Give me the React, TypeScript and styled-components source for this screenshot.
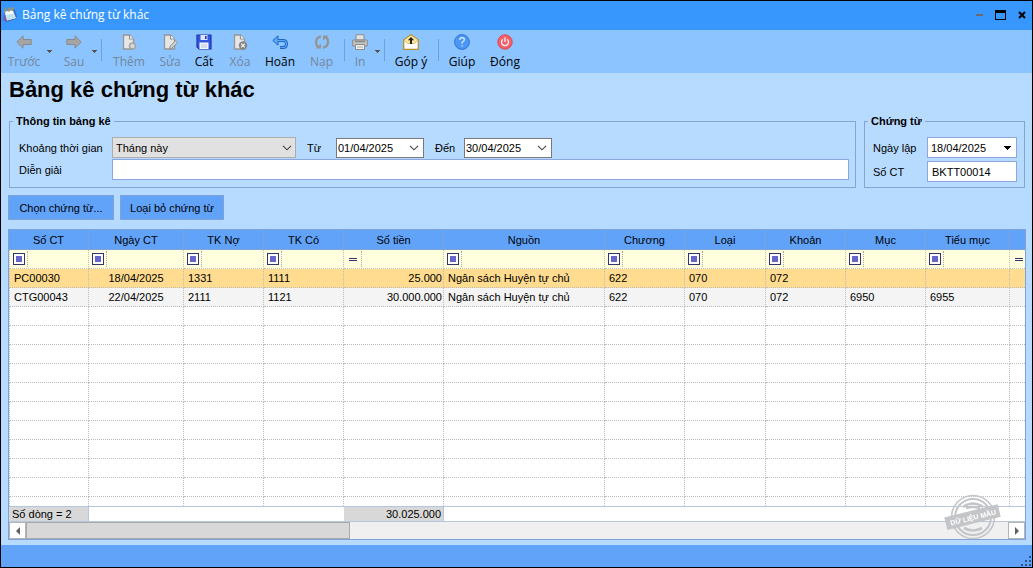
import React from "react";
import styled, { createGlobalStyle, css } from "styled-components";

const colors = {
  titleBar: "#3797fd",
  toolBar: "#8bc4ff",
  body: "#b7dbff",
  accent: "#62a3fa",
  accentLine: "#7fa3d6",
  groupLine: "#84a4d6",
  inputLine: "#8ea6e0",
  dots: "#bdbdbd",
  filterRow: "#ffffde",
  selectedRow: "#ffdc8f",
  alternateRow: "#f4f4f4",
};

const GlobalStyle = createGlobalStyle`
  *, *::before, *::after { box-sizing: border-box; }
  body {
    margin: 0;
    font-family: "Liberation Sans", Arial, sans-serif;
    font-size: 11px;
    line-height: 14px;
    color: #000;
  }
  button, input, select { font: inherit; color: inherit; }
  svg { display: block; flex: none; }
`;

const Window = styled.div`
  display: flex;
  flex-direction: column;
  height: 100vh;
  min-height: 440px;
  border: 1px solid #000;
  background: ${colors.body};
`;

/* ---------- title bar ---------- */

const TitleBar = styled.header`
  display: flex;
  align-items: center;
  gap: 4px;
  height: 29px;
  padding: 0 4px 2px 1px;
  background: ${colors.titleBar};
  color: #fff;
  font-family: "Open Sans", "Noto Sans", sans-serif;
`;

const WindowTitle = styled.span`
  flex: 1;
  font-size: 12px;
  line-height: 16px;
`;

const WindowButtons = styled.div`
  display: flex;
  gap: 8px;
`;

const WindowButton = styled.button`
  display: flex;
  align-items: center;
  justify-content: center;
  width: 13px;
  height: 14px;
  padding: 0;
  border: 0;
  background: none;
`;

/* ---------- tool bar ---------- */

const ToolBar = styled.nav`
  display: flex;
  align-items: flex-start;
  height: 43px;
  padding: 4px 5px 0;
  background: ${colors.toolBar};
  font-family: "Open Sans", "Noto Sans", sans-serif;
`;

const ToolButton = styled.button<{ $width: number }>`
  display: flex;
  flex: none;
  flex-direction: column;
  align-items: center;
  gap: 4px;
  width: ${(p) => p.$width}px;
  padding: 0;
  border: 0;
  background: none;
  font-size: 12px;
  line-height: 16px;
  white-space: nowrap;
  color: #000;
  &:disabled { color: #74869c; }
`;

const DropButton = styled.button<{ $width: number }>`
  display: flex;
  flex: none;
  align-items: center;
  justify-content: center;
  width: ${(p) => p.$width}px;
  height: 34px;
  padding: 0;
  border: 0;
  background: none;
`;

const ToolSeparator = styled.span`
  flex: none;
  width: 1px;
  height: 22px;
  margin: 5px 2px 0 3px;
  background: #6f9fdc;
`;

/* ---------- form ---------- */

const Content = styled.main`
  display: flex;
  flex: 1;
  flex-direction: column;
  min-height: 0;
  padding: 3px 6px 5px 7px;
`;

const PageTitle = styled.h1`
  margin: 0 0 10px 1px;
  font-size: 22px;
  line-height: 28px;
  font-weight: bold;
`;

const Groups = styled.div`
  display: flex;
  gap: 8px;
  padding: 0 1px;
`;

const Group = styled.fieldset<{ $width?: number }>`
  flex: ${(p) => (p.$width ? `0 0 ${p.$width}px` : "1")};
  min-width: 0;
  height: 74px;
  margin: 0;
  padding: 0 ${(p) => (p.$width ? 7 : 6)}px 0 8px;
  border: 1px solid ${colors.groupLine};
`;

const GroupTitle = styled.legend`
  margin-left: -5px;
  padding: 0 3px;
  font-weight: bold;
`;

const FieldRow = styled.div<{ $gap?: number }>`
  display: flex;
  align-items: center;
  margin-top: ${(p) => p.$gap ?? 1}px;
`;

const Label = styled.label<{ $width: number; $indent?: number }>`
  flex: none;
  width: ${(p) => p.$width}px;
  padding-left: ${(p) => p.$indent ?? 0}px;
  white-space: nowrap;
`;

const SelectBox = styled.div`
  display: grid;
  flex: none;
  align-items: center;
  width: 184px;
  height: 21px;
  > * { grid-area: 1 / 1; }
  > svg { justify-self: end; margin-right: 4px; pointer-events: none; }
`;

const Select = styled.select`
  appearance: none;
  width: 100%;
  height: 21px;
  padding: 0 20px 0 3px;
  border: 1px solid #adadad;
  border-radius: 0;
  background: #e1e1e1;
`;

const fieldBox = css`
  height: 21px;
  border: 1px solid ${colors.inputLine};
  border-radius: 0;
  background: #fff;
`;

const TextInput = styled.input`
  ${fieldBox}
  flex: 1;
  min-width: 0;
  padding: 0 4px;
`;

const DateBox = styled.div<{ $plain?: boolean }>`
  ${fieldBox}
  display: flex;
  flex: none;
  align-items: center;
  width: ${(p) => (p.$plain ? 90 : 88)}px;
  padding: 0 4px 0 ${(p) => (p.$plain ? 3 : 1)}px;
  ${(p) => !p.$plain && "border-color: #7a7a7a; height: 20px;"}
`;

const DateInput = styled.input`
  flex: 1;
  min-width: 0;
  padding: 0;
  border: 0;
  outline: 0;
  background: none;
`;

const IconButton = styled.button`
  display: flex;
  flex: none;
  padding: 0;
  border: 0;
  background: none;
`;

const Actions = styled.div`
  display: flex;
  gap: 6px;
  margin: 7px 0 9px;
`;

const ActionButton = styled.button<{ $width: number }>`
  width: ${(p) => p.$width}px;
  height: 25px;
  padding: 0;
  border: 1px solid ${colors.accentLine};
  background: ${colors.accent};
`;

/* ---------- grid ---------- */

const GridPanel = styled.section`
  position: relative;
  display: flex;
  flex: 1;
  flex-direction: column;
  min-height: 0;
  border: 1px solid ${colors.accentLine};
  background: #fff;
`;

const GridViewport = styled.div`
  flex: 1;
  min-height: 0;
  overflow: hidden;
`;

const Table = styled.table`
  width: 100%;
  table-layout: fixed;
  border-collapse: separate;
  border-spacing: 0;
`;

const HeadCell = styled.th`
  height: 20px;
  padding: 0;
  border-right: 1px solid ${colors.accentLine};
  border-bottom: 1px solid ${colors.accentLine};
  background: ${colors.accent};
  font-weight: normal;
  white-space: nowrap;
  &:last-child { border-right: 0; }
`;

const Cell = styled.td<{ $align?: string }>`
  height: 19px;
  padding: 0 1px 0 ${(p) => (p.$align ? 1 : 4)}px;
  border-right: 1px dotted ${colors.dots};
  border-bottom: 1px dotted ${colors.dots};
  text-align: ${(p) => p.$align ?? "left"};
  white-space: nowrap;
  overflow: hidden;
  &:first-child { border-left: 1px dotted ${colors.dots}; }
  &:last-child { border-right: 0; }
`;

const FilterCell = styled(Cell)`
  padding: 0;
`;

const Row = styled.tr<{ $tone?: string }>`
  background: ${(p) => p.$tone ?? "#fff"};
`;

const FilterButton = styled.button`
  display: flex;
  align-items: center;
  justify-content: center;
  width: 18px;
  height: 16px;
  padding: 0;
  border: 0;
  border-right: 1px dotted #a8a8a8;
  background: none;
`;

const SumCell = styled.td<{ $filled?: boolean; $align?: string }>`
  height: 16px;
  padding: 0 2px 0 3px;
  border-top: 1px solid #b4c6e0;
  border-bottom: 1px solid #b4c6e0;
  border-right: ${(p) => (p.$filled ? "1px solid #b4c6e0" : "0")};
  background: ${(p) => (p.$filled ? "#d8d8d8" : "#fff")};
  text-align: ${(p) => p.$align ?? "left"};
  white-space: nowrap;
`;

const ScrollBar = styled.div`
  display: flex;
  flex: none;
  height: 17px;
  background: #f0f0f0;
`;

const ScrollArrow = styled.button`
  display: flex;
  flex: none;
  align-items: center;
  justify-content: center;
  width: 17px;
  padding: 0;
  border: 1px solid #b4b4b4;
  background: #fff;
`;

const ScrollTrack = styled.div`
  flex: 1;
`;

const ScrollThumb = styled.div`
  width: 33%;
  height: 100%;
  border: 1px solid #a9a9a9;
  background: #d8d8d8;
`;

const Stamp = styled.div`
  position: absolute;
  right: 23px;
  bottom: -1px;
  pointer-events: none;
`;

const StatusBar = styled.footer`
  display: flex;
  flex: none;
  align-items: flex-end;
  justify-content: flex-end;
  height: 22px;
  background: ${colors.accent};
`;

/* ---------- drawings ---------- */

const Caret = ({ color = "#555" }: { color?: string }) => (
  <svg width="5" height="3" shapeRendering="crispEdges">
    <path d="M0 0h5v1H4v1H3v1H2V2H1V1H0z" fill={color} />
  </svg>
);

const Chevron = () => (
  <svg width="10" height="6" viewBox="0 0 10 6">
    <path d="M1 .8 5 4.8 9 .8" fill="none" stroke="#444" strokeWidth="1.1" />
  </svg>
);

const AppIcon = () => (
  <svg width="16" height="16" viewBox="0 0 16 16">
    <path d="M2 5.500 10.500 3l4 8.500-9.500 3.500z" fill="#4a5fa8" />
    <path d="M1.500 6.500V13l2.500 2 1-1z" fill="#7a5aa8" />
    <path d="M2.500 4.500 10.500 3l3.500 8-9 2.500z" fill="#fbfdff" />
    <path d="M4 8 11.500 6.500l2.300 4.600-8.500 2.400z" fill="#bfe3ee" />
    <path d="M3 5.500V2.500l1-1v3M7 5V1.500l1-.8v3M10 4V1.500l1-.8v3" fill="none" stroke="#a8925a" strokeWidth="1.100" />
    <path d="M12 2.500 14.500 10" stroke="#3f62b8" strokeWidth="1.200" />
  </svg>
);

const Page = () => (
  <>
    <path d="M2.500 1h6l4 4v10h-10z" fill="#e6e6e6" stroke="#969696" strokeWidth="1.300" />
    <path d="M8.500 1v4h4" fill="#f5f5f5" stroke="#969696" strokeWidth="1.200" />
  </>
);

const icons: Record<string, React.ReactNode> = {
  back: <path d="M.8 8 7 1.800V5.500h8.200v5H7v3.700z" fill="#a5a5a5" stroke="#8a8a8a" />,
  forward: <path d="M15.200 8 9 1.800V5.500H.8v5H9v3.700z" fill="#a5a5a5" stroke="#8a8a8a" />,
  add: (
    <>
      <Page />
      <circle cx="11.500" cy="12" r="3" fill="#d8d8d8" stroke="#a5a5a5" strokeWidth="1.600" />
    </>
  ),
  edit: (
    <>
      <Page />
      <path d="m7.500 15 .7-3L13.500 6.600 15.500 8.500l-5.300 5.500z" fill="#cfcfcf" stroke="#929292" />
    </>
  ),
  save: (
    <>
      <path d="M1 1h14v14H3l-2-2z" fill="#3457e0" stroke="#1c33b4" strokeWidth="1.200" />
      <path d="M4.500 1h7v5h-7z" fill="#dfe6ff" />
      <path d="M9 2h1.600v3H9z" fill="#2038b8" />
      <path d="M3.500 8.500h9V15h-9z" fill="#f4f6ff" />
      <path d="M5 11h6M5 13h6" stroke="#b4c0e8" />
    </>
  ),
  remove: (
    <>
      <Page />
      <circle cx="11" cy="11.500" r="4.200" fill="#868686" />
      <path d="m9.300 9.800 3.400 3.400m0-3.400-3.400 3.400" stroke="#eee" strokeWidth="1.300" />
    </>
  ),
  undo: (
    <>
      <path d="M4 6.500h7q3.500 0 3.500 3.500T11 13.500H8" fill="none" stroke="#1f66c8" strokeWidth="3" />
      <path d="M6 1.800v9.400L.8 6.500z" fill="#5aa7f4" stroke="#1f66c8" />
      <path d="M4 6.500h7q3.500 0 3.500 3.500T11 13.500H8.500" fill="none" stroke="#5aa7f4" strokeWidth="1.200" />
    </>
  ),
  reload: (
    <>
      <path d="M7 2.300Q2 3.500 2 8t3.500 5M9 13.700Q14 12.500 14 8t-3.500-5" fill="none" stroke="#959595" strokeWidth="2.400" />
      <path d="M1.500 14.500H7V9.500zM14.500 1.500H9v5z" fill="#959595" />
    </>
  ),
  print: (
    <>
      <path d="M4 .7h8V6H4z" fill="#e2e2e2" stroke="#8c8c8c" />
      <path d="M.7 6h14.600v6H.7z" fill="#c4c4c4" stroke="#8c8c8c" />
      <path d="M3 7.500h10" stroke="#888" strokeWidth="1.500" />
      <path d="M3.500 10.500h9v5h-9z" fill="#f0f0f0" stroke="#8c8c8c" />
      <path d="M5 13h6" stroke="#aaa" />
    </>
  ),
  mail: (
    <>
      <path d="M.7 6 8 .7 15.300 6v9.300H.7z" fill="#fff" stroke="#b8902c" strokeWidth="1.300" />
      <path d="M1.500 6 8 1.500 14.500 6 12 9H4z" fill="#ffe799" />
      <path d="m1 6 3.500 3.500h7L15 6" fill="none" stroke="#d6b765" />
      <path d="M8 3 4.800 6.300H7V10h2V6.300h2.200z" fill="#222" />
    </>
  ),
  help: (
    <>
      <circle cx="8" cy="8" r="7.400" fill="#4b97f8" stroke="#2f73d6" />
      <path d="M5.800 6q0-2.300 2.300-2.300t2.300 2.100Q10.400 7 8.100 8.300v1.500M8.100 11.200v1.400" fill="none" stroke="#e6f2ff" strokeWidth="1.200" />
    </>
  ),
  close: (
    <>
      <circle cx="8" cy="8" r="7.200" fill="#f4606a" stroke="#e0454f" />
      <path d="M5.800 5.400a3.500 3.500 0 1 0 4.400 0M8 3.500V8" fill="none" stroke="#fff" strokeWidth="1.200" />
    </>
  ),
};

const ToolIcon = ({ name }: { name: string }) => (
  <svg width="16" height="16" viewBox="0 0 16 16">
    {icons[name]}
  </svg>
);

const ContainsIcon = () => (
  <svg width="12" height="12" shapeRendering="crispEdges">
    <path d="M0 0h12v12H0z" fill="#33336e" />
    <path d="M1 1h10v10H1z" fill="#fff" />
    <path d="M3 3h6v6H3z" fill="#6666cc" />
  </svg>
);

const EqualsIcon = () => (
  <svg width="8" height="3" shapeRendering="crispEdges">
    <path d="M0 0h8v1H0zM0 2h8v1H0z" fill="#33336e" />
  </svg>
);

const StampDrawing = () => (
  <svg width="58" height="46" viewBox="0 0 58 46">
    <g fill="none" stroke="#c4c5c8">
      <circle cx="29" cy="23" r="21.500" strokeWidth="1.600" />
      <circle cx="29" cy="23" r="18" strokeWidth="2" />
      <path d="M19 13q10-7 20 0M22 14q7-2 14 0M20 34q9 5 18 0" strokeWidth="2.600" />
    </g>
    <g transform="rotate(-14 29 23)">
      <path d="M1 16.500h55v13H1z" fill="#c4c5c8" />
      <text x="29" y="26" fontSize="7" fontWeight="bold" textAnchor="middle" fill="#fff">
        DỮ LIỆU MẪU
      </text>
    </g>
  </svg>
);

const ResizeGrip = () => (
  <svg width="12" height="12" shapeRendering="crispEdges">
    <path d="M9 1h2v2H9zM5 5h2v2H5zM9 5h2v2H9zM1 9h2v2H1zM5 9h2v2H5zM9 9h2v2H9z" fill="#2f5488" />
  </svg>
);

/* ---------- data ---------- */

type Tool =
  | { kind: "button"; label: string; icon: string; width: number; disabled?: boolean }
  | { kind: "drop"; label: string; width: number }
  | { kind: "separator" };

const tools: Tool[] = [
  { kind: "button", label: "Trước", icon: "back", width: 36, disabled: true },
  { kind: "drop", label: "Danh sách trước", width: 15 },
  { kind: "button", label: "Sau", icon: "forward", width: 34, disabled: true },
  { kind: "drop", label: "Danh sách sau", width: 7 },
  { kind: "separator" },
  { kind: "button", label: "Thêm", icon: "add", width: 50, disabled: true },
  { kind: "button", label: "Sửa", icon: "edit", width: 32, disabled: true },
  { kind: "button", label: "Cất", icon: "save", width: 36 },
  { kind: "button", label: "Xóa", icon: "remove", width: 36, disabled: true },
  { kind: "button", label: "Hoãn", icon: "undo", width: 44 },
  { kind: "button", label: "Nạp", icon: "reload", width: 39, disabled: true },
  { kind: "separator" },
  { kind: "button", label: "In", icon: "print", width: 26, disabled: true },
  { kind: "drop", label: "Chọn mẫu in", width: 8 },
  { kind: "separator" },
  { kind: "button", label: "Góp ý", icon: "mail", width: 48 },
  { kind: "separator" },
  { kind: "button", label: "Giúp", icon: "help", width: 42 },
  { kind: "button", label: "Đóng", icon: "close", width: 44 },
];

type Column = { title: string; width?: number; align?: string; numeric?: boolean };

const columns: Column[] = [
  { title: "Số CT", width: 80 },
  { title: "Ngày CT", width: 95, align: "center" },
  { title: "TK Nợ", width: 80 },
  { title: "TK Có", width: 80 },
  { title: "Số tiền", width: 100, align: "right", numeric: true },
  { title: "Nguồn", width: 161 },
  { title: "Chương", width: 80 },
  { title: "Loại", width: 81 },
  { title: "Khoản", width: 80 },
  { title: "Mục", width: 80 },
  { title: "Tiểu mục", width: 84 },
  { title: "", numeric: true },
];

const records = [
  ["PC00030", "18/04/2025", "1331", "1111", "25.000", "Ngân sách Huyện tự chủ", "622", "070", "072", "", "", ""],
  ["CTG00043", "22/04/2025", "2111", "1121", "30.000.000", "Ngân sách Huyện tự chủ", "622", "070", "072", "6950", "6955", ""],
];

const emptyRows = Array.from({ length: 11 }, (_, i) => i);

const Columns = () => (
  <colgroup>
    {columns.map((c, i) => (
      <col key={i} width={c.width} />
    ))}
  </colgroup>
);

const DateField = ({ id, value, plain }: { id: string; value: string; plain?: boolean }) => (
  <DateBox $plain={plain}>
    <DateInput id={id} defaultValue={value} />
    <IconButton type="button" aria-label="Mở lịch">
      {plain ? (
        <svg width="9" height="4" shapeRendering="crispEdges">
          <path d="M1 0h7v1H7v1H6v1H5v1H4V3H3V2H2V1H1z" fill="#000" />
        </svg>
      ) : (
        <Chevron />
      )}
    </IconButton>
  </DateBox>
);

export default function App() {
  return (
    <>
      <GlobalStyle />
      <Window>
        <TitleBar>
          <AppIcon />
          <WindowTitle>Bảng kê chứng từ khác</WindowTitle>
          <WindowButtons>
            <WindowButton type="button" aria-label="Thu nhỏ">
              <svg width="7" height="2"><path d="M0 0h7v2H0z" fill="#6b6b6b" /></svg>
            </WindowButton>
            <WindowButton type="button" aria-label="Phóng to">
              <svg width="11" height="10" shapeRendering="crispEdges">
                <path d="M0 0h11v10H0zM1 3v6h9V3z" fill="#000" fillRule="evenodd" />
              </svg>
            </WindowButton>
            <WindowButton type="button" aria-label="Đóng cửa sổ">
              <svg width="8" height="8"><path d="m1 1 6 6M7 1 1 7" stroke="#000" strokeWidth="2" /></svg>
            </WindowButton>
          </WindowButtons>
        </TitleBar>

        <ToolBar>
          {tools.map((tool, i) => {
            if (tool.kind === "separator") return <ToolSeparator key={i} />;
            if (tool.kind === "drop")
              return (
                <DropButton key={i} type="button" $width={tool.width} aria-label={tool.label}>
                  <Caret />
                </DropButton>
              );
            return (
              <ToolButton key={i} type="button" $width={tool.width} disabled={tool.disabled}>
                <ToolIcon name={tool.icon} />
                {tool.label}
              </ToolButton>
            );
          })}
        </ToolBar>

        <Content>
          <PageTitle>Bảng kê chứng từ khác</PageTitle>
          <Groups>
            <Group>
              <GroupTitle>Thông tin bảng kê</GroupTitle>
              <FieldRow $gap={9}>
                <Label $width={94} $indent={1} htmlFor="period">Khoảng thời gian</Label>
                <SelectBox>
                  <Select id="period" defaultValue="Tháng này">
                    <option>Tháng này</option>
                  </Select>
                  <Chevron />
                </SelectBox>
                <Label $width={40} $indent={11} htmlFor="from">Từ</Label>
                <DateField id="from" value="01/04/2025" />
                <Label $width={40} $indent={11} htmlFor="to">Đến</Label>
                <DateField id="to" value="30/04/2025" />
              </FieldRow>
              <FieldRow>
                <Label $width={94} $indent={1} htmlFor="note">Diễn giải</Label>
                <TextInput id="note" />
              </FieldRow>
            </Group>
            <Group $width={161}>
              <GroupTitle>Chứng từ</GroupTitle>
              <FieldRow $gap={9}>
                <Label $width={54} htmlFor="issued">Ngày lập</Label>
                <DateField id="issued" value="18/04/2025" plain />
              </FieldRow>
              <FieldRow $gap={3}>
                <Label $width={54} htmlFor="number">Số CT</Label>
                <TextInput id="number" defaultValue="BKTT00014" />
              </FieldRow>
            </Group>
          </Groups>

          <Actions>
            <ActionButton type="button" $width={106}>Chọn chứng từ...</ActionButton>
            <ActionButton type="button" $width={104}>Loại bỏ chứng từ</ActionButton>
          </Actions>

          <GridPanel>
            <GridViewport>
              <Table>
                <Columns />
                <thead>
                  <tr>
                    {columns.map((c, i) => (
                      <HeadCell key={i}>{c.title}</HeadCell>
                    ))}
                  </tr>
                </thead>
                <tbody>
                  <Row $tone={colors.filterRow}>
                    {columns.map((c, i) => (
                      <FilterCell key={i}>
                        <FilterButton type="button" aria-label={`Lọc ${c.title}`}>
                          {c.numeric ? <EqualsIcon /> : <ContainsIcon />}
                        </FilterButton>
                      </FilterCell>
                    ))}
                  </Row>
                  {records.map((record, r) => (
                    <Row key={r} $tone={r === 0 ? colors.selectedRow : colors.alternateRow}>
                      {record.map((value, i) => (
                        <Cell key={i} $align={columns[i].align}>{value}</Cell>
                      ))}
                    </Row>
                  ))}
                  {emptyRows.map((r) => (
                    <Row key={r}>
                      {columns.map((_, i) => (
                        <Cell key={i} />
                      ))}
                    </Row>
                  ))}
                </tbody>
              </Table>
            </GridViewport>
            <Table>
              <Columns />
              <tfoot>
                <tr>
                  <SumCell $filled>Số dòng = 2</SumCell>
                  <SumCell colSpan={3} />
                  <SumCell $filled $align="right">30.025.000</SumCell>
                  <SumCell colSpan={7} />
                </tr>
              </tfoot>
            </Table>
            <ScrollBar>
              <ScrollArrow type="button" aria-label="Cuộn trái">
                <svg width="4" height="8"><path d="M4 0v8L0 4z" fill="#606060" /></svg>
              </ScrollArrow>
              <ScrollTrack>
                <ScrollThumb />
              </ScrollTrack>
              <ScrollArrow type="button" aria-label="Cuộn phải">
                <svg width="4" height="8"><path d="M0 0v8l4-4z" fill="#606060" /></svg>
              </ScrollArrow>
            </ScrollBar>
            <Stamp>
              <StampDrawing />
            </Stamp>
          </GridPanel>
        </Content>

        <StatusBar>
          <ResizeGrip />
        </StatusBar>
      </Window>
    </>
  );
}
